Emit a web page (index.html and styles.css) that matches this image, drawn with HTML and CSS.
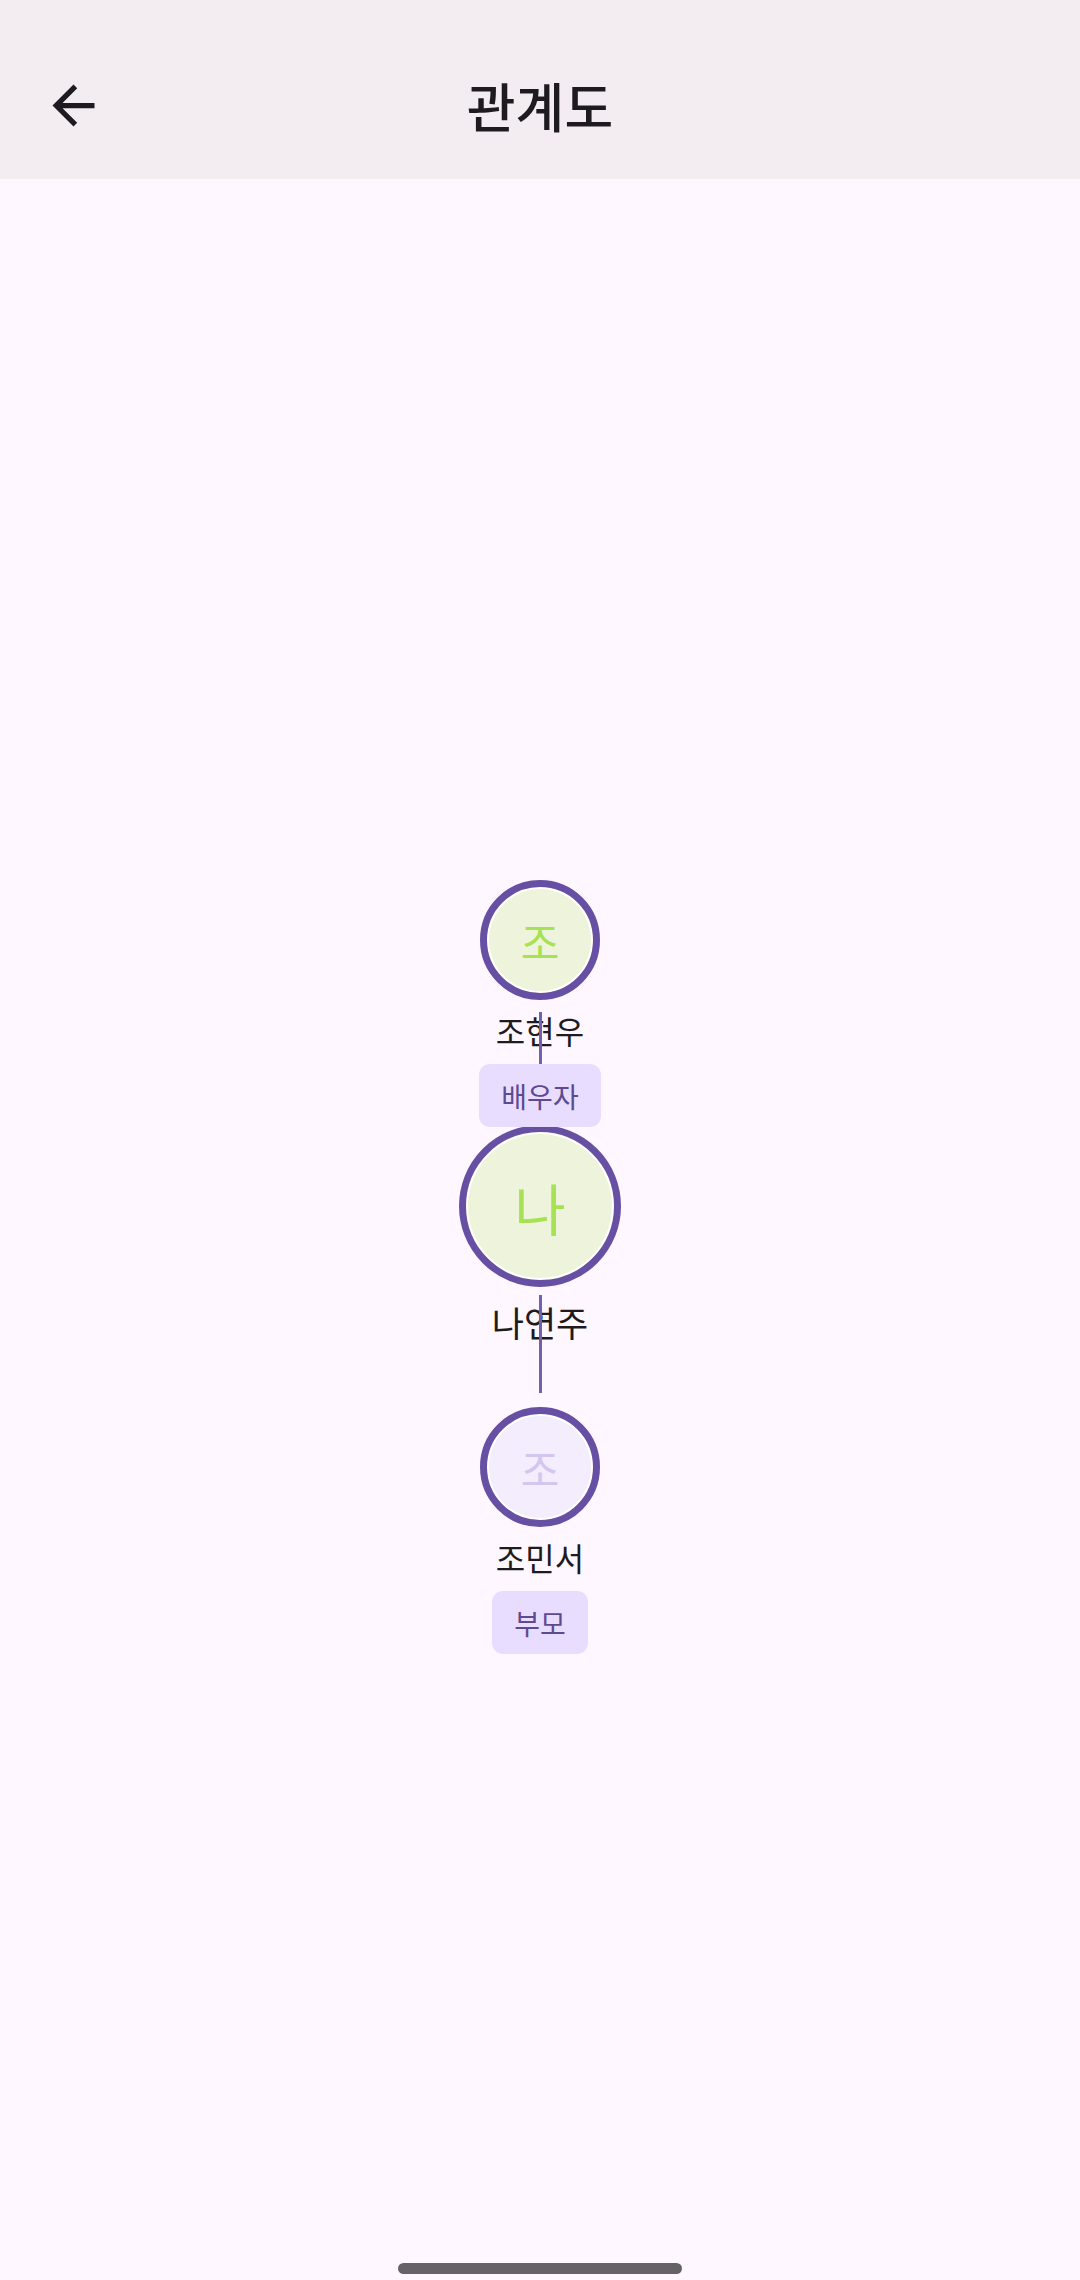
FILE: index.html
```html
<!DOCTYPE html>
<html lang="ko">
<head>
<meta charset="utf-8">
<title>관계도</title>
<link rel="stylesheet" href="styles.css">
</head>
<body>
<header class="appbar">
  <div class="appbar-left">
    <svg class="back" viewBox="0 0 24 24" width="63" height="63" aria-hidden="true">
      <path d="M20 11H7.83l5.59-5.59L12 4l-8 8 8 8 1.41-1.41L7.83 13H20v-2z" fill="#1D1B20"/>
    </svg>
  </div>
  <h1 class="title">관계도</h1>
  <div class="appbar-right"></div>
</header>
<main class="canvas">
  <div class="edge edge-1"></div>
  <div class="edge edge-2"></div>

  <div class="node">
    <div class="avatar avatar-sm avatar-green">조</div>
    <div class="name">조현우</div>
    <div class="chip">배우자</div>
  </div>

  <div class="node node-me">
    <div class="avatar avatar-lg avatar-green">나</div>
    <div class="name name-lg">나연주</div>
  </div>

  <div class="node node-child">
    <div class="avatar avatar-sm avatar-lavender">조</div>
    <div class="name">조민서</div>
    <div class="chip">부모</div>
  </div>
</main>
<footer class="navbar">
  <div class="handle"></div>
</footer>
</body>
</html>
```

FILE: styles.css
```css
* { box-sizing: border-box; }
html, body { margin: 0; padding: 0; }
body {
  width: 1080px;
  min-height: 2280px;
  background: #FEF7FF;
  font-family: "Noto Sans CJK KR", "Noto Sans", sans-serif;
  color: #1D1B20;
  display: flex;
  flex-direction: column;
}
.appbar {
  height: 179px;
  background: #F3EDF2;
  display: grid;
  grid-template-columns: 1fr auto 1fr;
  align-items: center;
  padding: 74px 0 42px;
}
.appbar-left { padding-left: 42px; display: flex; align-items: center; height: 63px; }
.back { display: block; }
.title {
  margin: 0;
  font-size: 53px;
  font-weight: 500;
  line-height: 63px;
  color: #1D1B20;
}
.canvas {
  flex: 1;
  position: relative;
  display: flex;
  flex-direction: column;
  align-items: center;
  padding-top: 701px;
}
.edge {
  position: absolute;
  left: 539px;
  width: 3px;
  background: #7260AE;
  z-index: 1;
}
.edge-1 { top: 833px; height: 100px; }
.edge-2 { top: 1116px; height: 98px; }
.node {
  display: flex;
  flex-direction: column;
  align-items: center;
}
.node-me { margin-top: -2px; }
.node-child { margin-top: 63px; }
.avatar {
  position: relative;
  z-index: 2;
  border-radius: 50%;
  border: 7px solid #6750A4;
  box-shadow: inset 0 0 0 2px #FFFFFF;
  display: flex;
  align-items: center;
  justify-content: center;
}
.avatar-sm { width: 120px; height: 120px; font-size: 42px; }
.avatar-lg { width: 162px; height: 162px; font-size: 56px; }
.avatar-green { background: #EEF4DB; color: #A7E255; }
.avatar-lavender { background: #F3EDFE; color: #D4C6EF; }
.name {
  position: relative;
  z-index: 0;
  margin-top: 10px;
  font-size: 32px;
  line-height: 40px;
  color: #1D1B20;
}
.name-lg {
  margin-top: 13px;
  font-size: 35px;
  line-height: 44px;
}
.chip {
  position: relative;
  z-index: 3;
  margin-top: 14px;
  height: 63px;
  padding: 0 22px;
  border-radius: 11px;
  background: #E9DDFF;
  color: #5E4A91;
  font-size: 28px;
  display: flex;
  align-items: center;
}
.navbar {
  height: 110px;
  display: flex;
  align-items: flex-end;
  justify-content: center;
  padding-bottom: 6px;
}
.handle {
  width: 284px;
  height: 11px;
  border-radius: 6px;
  background: #666367;
}
```
